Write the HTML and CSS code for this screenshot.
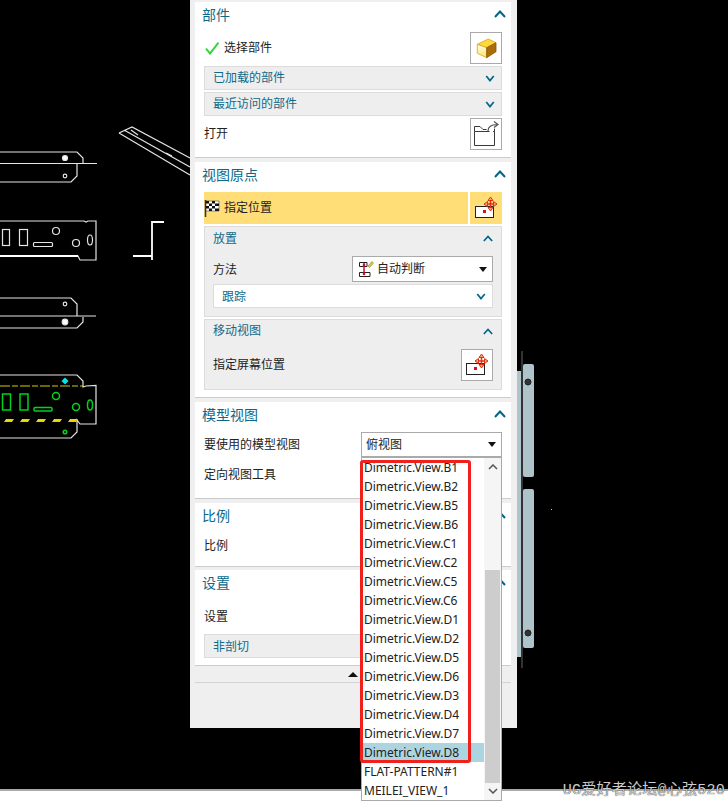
FILE: index.html
```html
<!DOCTYPE html>
<html lang="zh">
<head>
<meta charset="utf-8">
<title>视图</title>
<link rel="stylesheet" href="styles.css">
</head>
<body>
<svg class="defs" width="0" height="0">
  <defs>
    <linearGradient id="cubeFace" x1="0" y1="0" x2="0" y2="1">
      <stop offset="0" stop-color="#fffdf0"/><stop offset="1" stop-color="#ffe45c"/>
    </linearGradient>
    <symbol id="up" viewBox="0 0 12 8"><path d="M1 7 6 1.500 11 7" fill="none" stroke="#00658a" stroke-width="2"/></symbol>
    <symbol id="down" viewBox="0 0 12 8"><path d="M1.500 1 6 6.500 10.500 1" fill="none" stroke="#00658a" stroke-width="2"/></symbol>
    <symbol id="move" viewBox="0 0 32 32">
      <rect x="5.500" y="14.500" width="18" height="11" fill="#fff" stroke="#222"/>
      <rect x="13" y="18" width="3" height="3" fill="#d8101a"/>
      <path d="M20.500 6v12M14.500 12h12" stroke="#e0330f" stroke-width="1.500" fill="none"/>
      <path d="M18 8.500 20.500 5 23 8.500ZM18 15.500 20.500 19 23 15.500ZM17.500 9.500 14 12 17.500 14.500ZM23.500 9.500 27 12 23.500 14.500Z" stroke="#e0330f" fill="#f6a58a"/>
    </symbol>
  </defs>
</svg>

<main class="desktop">
  <svg class="cad" width="728" height="802" viewBox="0 0 728 802">
    <g class="w">
      <path d="M0 152H77L83 158V163M0 163.500H97M77 164V176L71 182H0"/>
      <circle cx="65" cy="158" r="2.500" class="fw"/>
      <circle cx="65" cy="176" r="1.800"/>
      <path d="M119 133 132 127 190 158M119 133 190 175M124 130 190 167M131 130 138 135M166 153 172 156"/>
      <path d="M0 221H84L86 222 88 221H96V260H80L78 256H0" />
      <path d="M0 256H78" class="thick"/>
      <rect x="2.500" y="229.500" width="7" height="16"/>
      <rect x="19.500" y="229.500" width="8" height="16"/>
      <rect x="33.500" y="242.500" width="19" height="4" rx="1"/>
      <circle cx="56" cy="231" r="3.500"/>
      <circle cx="76" cy="243" r="3.500"/>
      <ellipse cx="90" cy="240" rx="2.500" ry="5"/>
      <path class="thick" d="M133 256H152M152 260V222H164"/>
      <path d="M0 298H71L77 304V316M0 316H96M83 317V322L77 328H0"/>
      <circle cx="65" cy="304" r="1.800"/>
      <circle cx="65" cy="322" r="2.800" class="fw"/>
      <path d="M0 375H77L83 381V387L86 386 96 385.500V424H80L77 420V432L71 438H0"/>
    </g>
    <g class="g">
      <rect x="2.500" y="394" width="8" height="16"/>
      <rect x="20" y="394" width="8" height="16"/>
      <rect x="34" y="407.500" width="18" height="3.500" rx="1"/>
      <circle cx="56" cy="396" r="3.500"/>
      <circle cx="76" cy="407" r="3.500"/>
      <ellipse cx="90" cy="405" rx="2.500" ry="5"/>
      <circle cx="65" cy="432" r="1.800"/>
    </g>
    <path class="y1" d="M0 386H83"/>
    <path class="y2" d="M4 422 6 419H14L12 422ZM20 422 22 419H30L28 422ZM36 422 38 419H46L44 422ZM52 422 54 419H62L60 422ZM68 422 70 419H78L76 422Z"/>
    <path class="c" d="M61.500 381 65 377.500 68.500 381 65 384.500Z"/>
    <rect class="plate" x="517" y="371" width="4" height="286"/>
    <rect class="bar" x="521" y="351" width="2" height="317"/>
    <rect class="plate" x="523" y="364" width="11" height="113" rx="2"/>
    <rect class="plate" x="523" y="489" width="11" height="159" rx="2"/>
    <circle class="hole" cx="528" cy="382" r="3"/>
    <circle class="hole" cx="528" cy="633" r="3"/>
    <rect class="dot" x="551" y="509" width="1" height="1"/>
  </svg>

  <section class="dialog">
    <div class="panel p-part">
      <header class="head"><h2>部件</h2><svg class="chev"><use href="#up"/></svg></header>
      <div class="row r-select">
        <div class="lead">
          <svg class="check" width="14" height="14" viewBox="0 0 14 14"><path d="M1 7.500 5 12.500 13.500 1.500" fill="none" stroke="#2fd33f" stroke-width="2"/></svg>
          <span class="up1">选择部件</span>
        </div>
        <button class="btn">
          <svg width="30" height="30" viewBox="0 0 30 30">
            <path d="M6.300 11.300 17.300 6 25 9.700 15.700 14.700Z" fill="#ffd83a" stroke="#d9a514" stroke-width=".8"/>
            <path d="M6.300 11.300 15.700 14.700V24.700L6.300 20.300Z" fill="url(#cubeFace)" stroke="#d9a514" stroke-width=".8"/>
            <path d="M15.700 14.700 25 9.700V18.700L15.700 24.700Z" fill="#a96c0c" stroke="#8a5708" stroke-width=".8"/>
          </svg>
        </button>
      </div>
      <div class="group"><span class="up1">已加载的部件</span><svg class="chev"><use href="#down"/></svg></div>
      <div class="group"><span class="up1">最近访问的部件</span><svg class="chev"><use href="#down"/></svg></div>
      <div class="row r-open">
        <span class="up1">打开</span>
        <button class="btn">
          <svg width="30" height="30" viewBox="0 0 30 30">
            <path d="M3.500 12.500V7.500H9L12 10.500H15.500M18.500 12.500H3.500V26.500H23.500V12.500H22M23.500 12.500V9.500" fill="none" stroke="#3a3a3a" stroke-width="1"/>
            <path d="M17 12C17 8 20 5.500 26 5.500M23 2.500 27 5.500 23 8.500" fill="none" stroke="#555" stroke-width="1.200"/>
          </svg>
        </button>
      </div>
    </div>

    <div class="panel p-origin">
      <header class="head"><h2>视图原点</h2><svg class="chev"><use href="#up"/></svg></header>
      <div class="pick">
        <div class="pick-main">
          <svg width="16" height="18" viewBox="0 0 16 18">
            <path d="M1.500 1V18" stroke="#333" stroke-width="1.500"/>
            <path d="M2 2H15V12H2Z" fill="#fff" stroke="#222" stroke-width=".5"/>
            <path d="M2 2H5V4.500H2ZM8 2H11V4.500H8ZM5 4.500H8V7H5ZM11 4.500H15V7H11ZM2 7H5V9.500H2ZM8 7H11V9.500H8ZM5 9.500H8V12H5ZM11 9.500H15V12H11Z" fill="#111"/>
          </svg>
          <span class="up1">指定位置</span>
        </div>
        <div class="pick-btn"><svg width="32" height="32"><use href="#move"/></svg></div>
      </div>
      <div class="sub s-place">
        <div class="sub-head"><span>放置</span><svg class="chev"><use href="#up"/></svg></div>
        <div class="method">
          <span>方法</span>
          <div class="select s-method">
            <svg width="16" height="18" viewBox="0 0 16 18">
              <path d="M1.500 2.500H9V6.500H1.500ZM1.500 12.500H12V16.500H1.500Z" fill="#fff" stroke="#222"/>
              <path d="M6 3V14" stroke="#c8102e" stroke-width="1.500"/>
              <path d="M10 6 14 1.500 15.500 3 11.500 7.500Z" fill="#e8c93a" stroke="#6b6b20" stroke-width=".5"/>
              <circle cx="6" cy="14" r="1.300" fill="#c8102e"/><circle cx="6" cy="5" r="1.300" fill="#c8102e"/>
            </svg>
            <span class="val up1">自动判断</span><i class="tri"></i>
          </div>
        </div>
        <div class="group g-white"><span>跟踪</span><svg class="chev"><use href="#down"/></svg></div>
      </div>
      <div class="sub s-move">
        <div class="sub-head"><span class="up1">移动视图</span><svg class="chev"><use href="#up"/></svg></div>
        <div class="row r-screen">
          <span class="up1">指定屏幕位置</span>
          <button class="btn"><svg width="30" height="30" viewBox="1 1 30 30"><use href="#move" width="32" height="32"/></svg></button>
        </div>
      </div>
    </div>

    <div class="panel p-model">
      <header class="head"><h2>模型视图</h2><svg class="chev"><use href="#up"/></svg></header>
      <div class="row r-model">
        <span class="up1">要使用的模型视图</span>
        <div class="select s-model"><span class="val up1">俯视图</span><i class="tri"></i></div>
      </div>
      <div class="row r-orient"><span>定向视图工具</span></div>
    </div>

    <div class="panel p-scale">
      <header class="head"><h2>比例</h2><svg class="chev"><use href="#up"/></svg></header>
      <div class="row r-scale"><span>比例</span></div>
    </div>

    <div class="panel p-set">
      <header class="head"><h2>设置</h2><svg class="chev"><use href="#up"/></svg></header>
      <div class="row r-set"><span>设置</span></div>
      <div class="group"><span>非剖切</span></div>
    </div>

    <div class="foot"><i class="tri-up"></i></div>
  </section>

  <div class="bottom"></div>

  <div class="dropdown">
    <ul class="list">
      <li>Dimetric.View.B1</li>
      <li>Dimetric.View.B2</li>
      <li>Dimetric.View.B5</li>
      <li>Dimetric.View.B6</li>
      <li>Dimetric.View.C1</li>
      <li>Dimetric.View.C2</li>
      <li>Dimetric.View.C5</li>
      <li>Dimetric.View.C6</li>
      <li>Dimetric.View.D1</li>
      <li>Dimetric.View.D2</li>
      <li>Dimetric.View.D5</li>
      <li>Dimetric.View.D6</li>
      <li>Dimetric.View.D3</li>
      <li>Dimetric.View.D4</li>
      <li>Dimetric.View.D7</li>
      <li class="sel">Dimetric.View.D8</li>
      <li>FLAT-PATTERN#1</li>
      <li>MEILEI_VIEW_1</li>
    </ul>
    <div class="scroll">
      <svg class="sarrow" width="10" height="6" viewBox="0 0 10 6"><path d="M1 5 5 1 9 5" fill="none" stroke="#555" stroke-width="1.500"/></svg>
      <div class="thumb"></div>
      <svg class="sarrow" width="10" height="6" viewBox="0 0 10 6"><path d="M1 1 5 5 9 1" fill="none" stroke="#555" stroke-width="1.500"/></svg>
    </div>
  </div>
  <div class="redbox"></div>

  <div class="mark">UG爱好者论坛@心弦520</div>
</main>
</body>
</html>
```
FILE: styles.css
```css
* { box-sizing: border-box; }
html, body { margin: 0; padding: 0; background: #000; }
body { font: 12px/16px "Noto Sans CJK SC", "Noto Sans", sans-serif; color: #222; }
.defs { position: absolute; }
.desktop { position: relative; width: 728px; height: 802px; overflow: hidden; background: #000; }
.cad { position: absolute; left: 0; top: 0; }
.w { fill: none; stroke: #e4e4e4; stroke-width: 1.200; }
.w .fw { fill: #fff; }
.w .thick { stroke-width: 1.800; stroke: #fff; }
.g { fill: none; stroke: #00d21e; stroke-width: 1.500; }
.y1 { stroke: #d8cc00; stroke-width: 1.200; stroke-dasharray: 10 2 6 2; fill: none; }
.y2 { fill: #e6d800; }
.c { fill: #00e6e6; }
.plate { fill: #afc3cb; }
.bar { fill: #333; }
.hole { fill: #333; stroke: #222; }
.dot { fill: #ccc; }

.up1 { padding-bottom: 2px; }

.dialog {
  position: absolute; left: 190px; top: 0; width: 327px; height: 728px;
  background: #efefef; padding: 2px 6px 0 5px;
  display: flex; flex-direction: column;
}
.panel { background: #fff; border-bottom: 1px solid #ccc; margin-bottom: 4px; padding: 0 9px; }
.p-part { height: 156px; }
.p-origin { height: 236px; }
.p-model { height: 97px; }
.p-scale { height: 64px; margin-bottom: 3px; }
.p-set { height: 96px; margin-bottom: 0; }
.head { display: flex; align-items: center; justify-content: space-between; height: 26px; margin: 0 -4px 0 -2px; }
.head h2 { margin: 0 0 2px; font-size: 14px; font-weight: 400; color: #0a6a8c; }
.head .chev { width: 12px; height: 8px; margin-bottom: 2px; }
.chev { width: 10px; height: 7px; flex: none; }
.row { display: flex; align-items: center; justify-content: space-between; }
.r-select { height: 32px; margin-top: 4px; margin-bottom: 2px; }
.lead { display: flex; align-items: center; gap: 5px; padding-left: 1px; }
.btn { width: 32px; height: 32px; padding: 0; background: #fff; border: 1px solid #aaa; display: flex; align-items: center; justify-content: center; }
.group { height: 24px; margin-bottom: 2px; padding: 0 6px 0 8px; background: #eee; border: 1px solid #dcdcdc; display: flex; align-items: center; justify-content: space-between; color: #0f6a88; }
.r-open { height: 32px; }

.pick { display: flex; height: 32px; gap: 2px; margin: 4px 0 2px; }
.pick-main { flex: 1; background: #ffdd77; display: flex; align-items: center; gap: 4px; color: #222; }
.pick-btn { width: 32px; background: #ffdd77; }
.pick-btn svg { display: block; }
.sub { background: #eee; border: 1px solid #dcdcdc; padding: 0 8px; margin-bottom: 2px; }
.s-place { height: 91px; }
.s-move { height: 71px; margin-bottom: 0; }
.sub-head { height: 22px; display: flex; align-items: center; justify-content: space-between; color: #0f6a88; }
.method { display: flex; align-items: center; justify-content: space-between; height: 26px; margin-top: 7px; }
.select { background: #fff; border: 1px solid #aaa; display: flex; align-items: center; }
.s-method { width: 141px; height: 26px; padding: 0 4px 0 5px; gap: 3px; }
.val { flex: 1; }
.tri { width: 0; height: 0; border: 4px solid transparent; border-top: 5px solid #111; border-bottom: 0; margin-right: 1px; flex: none; }
.g-white { background: #fff; margin: 2px 0 0; padding: 0 6px 0 8px; }
.r-screen { height: 32px; margin-top: 7px; }

.r-model { height: 25px; margin-top: 4px; }
.s-model { width: 141px; height: 25px; padding: 0 4px 0 4px; }
.r-orient { height: 16px; margin-top: 9px; }
.r-scale { height: 16px; margin-top: 8px; }
.r-set { height: 16px; margin-top: 12px; margin-bottom: 10px; }
.foot { height: 17px; border-bottom: 1px solid #d4d4d4; display: flex; justify-content: center; align-items: center; }
.tri-up { width: 0; height: 0; border: 5px solid transparent; border-bottom: 5px solid #111; border-top: 0; }

.dropdown {
  position: absolute; left: 361px; top: 457px; width: 141px; height: 344px;
  background: #fff; border: 1px solid #aaa; display: flex;
  font-family: "Noto Sans", sans-serif;
}
.list { list-style: none; margin: 0; padding: 0; flex: 1; }
.list li { height: 19px; line-height: 19px; padding-left: 2px; color: #222; white-space: nowrap; }
.list .sel { background: #add5e0; }
.scroll { width: 17px; background: #f5f5f5; display: flex; flex-direction: column; align-items: center; padding: 6px 0; }
.sarrow { flex: none; }
.thumb { width: 15px; height: 213px; background: #cdcdcd; margin-top: 100px; margin-bottom: 5px; }
.redbox { position: absolute; left: 360px; top: 460px; width: 111px; height: 303px; border: 3px solid #f0201c; border-radius: 3px; }
.bottom { position: absolute; left: 0; right: 0; top: 789px; height: 13px; background: #fff; border-top: 2px solid #aaa; }
.mark { position: absolute; right: 3px; top: 782px; font: 15px/18px "Liberation Mono", "Noto Sans CJK SC", monospace; letter-spacing: .25px; color: #ccc; text-shadow: 0 0 1px #000; white-space: nowrap; }
```
